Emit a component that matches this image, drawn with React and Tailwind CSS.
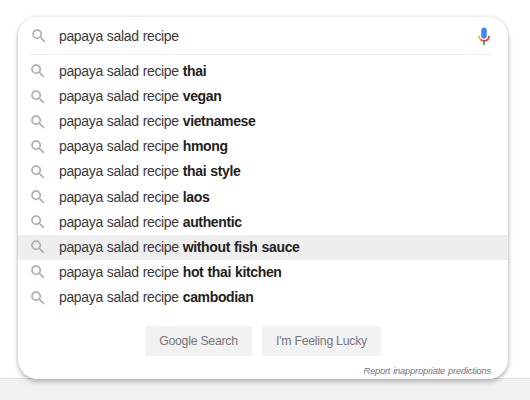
const suggestions = [
  'thai',
  'vegan',
  'vietnamese',
  'hmong',
  'thai style',
  'laos',
  'authentic',
  'without fish sauce',
  'hot thai kitchen',
  'cambodian',
];

function SearchIcon({ className }) {
  return (
    <svg viewBox="0 0 24 24" fill="#abaeb2" stroke="#abaeb2" strokeWidth="0.3" className={className}>
      <path d="M15.5 14h-.79l-.28-.27A6.471 6.471 0 0 0 16 9.5 6.5 6.5 0 1 0 9.5 16c1.61 0 3.09-.59 4.23-1.57l.27.28v.79l5 4.99L20.49 19l-4.99-5zm-6 0C7.01 14 5 11.99 5 9.5S7.01 5 9.5 5 14 7.01 14 9.5 11.99 14 9.5 14z" />
    </svg>
  );
}

function MicIcon() {
  return (
    <svg viewBox="0 0 24 24" className="w-5 h-5">
      <path fill="#4285f4" stroke="#4285f4" strokeWidth="0.7" d="M12 15c1.66 0 3-1.31 3-2.97V5c0-1.66-1.34-3-3-3S9 3.34 9 5v7.03C9 13.69 10.34 15 12 15z" />
      <path fill="#34a853" d="M10.9 18.08h2.2V22.4h-2.2z" />
      <path fill="#fbbc05" d="M7.05 16.87A6.98 6.98 0 0 1 4.8 12h2.2c0 1.39.56 2.44 1.47 3.35l-1.42 1.52z" />
      <path fill="#ea4335" d="M12 16.93a4.97 4.97 0 0 1-3.54-1.55l-1.41 1.49A6.98 6.98 0 0 0 12 19c3.87 0 7.2-2.92 7.2-7H17c0 2.92-2.24 4.93-5 4.93z" />
    </svg>
  );
}

export default function App() {
  return (
    <div className="h-[400px] grid bg-[linear-gradient(to_bottom,#fff_378px,#e4e4e4_378px,#e4e4e4_379px,#f2f2f2_379px)] font-['Liberation_Sans',Arial,sans-serif] text-[14px] tracking-[-0.35px] [word-spacing:0.5px] text-[#222]">
      <div className="mt-[17px] ml-[18px] w-[490px] h-[362px] flex flex-col rounded-[20px] bg-white shadow-[0_3px_5px_0_rgba(32,33,36,0.26),0_0_4px_rgba(32,33,36,0.14)]">
        <div className="h-[37px] flex items-center pl-3 pr-[14px]">
          <SearchIcon className="w-[18px] h-[18px]" />
          <span className="flex-1 ml-[11px] pt-px text-[#3a3a3a]">papaya salad recipe</span>
          <MicIcon />
        </div>
        <div className="ml-3 mr-4 h-px bg-[#eeeeee]" />

        <ul className="mt-[3.8px]">
          {suggestions.map(s => (
            <li
              key={s}
              className={`h-[25.15px] flex items-center pl-[11px] ${s === 'without fish sauce' ? 'bg-[#eeeeee]' : ''}`}
            >
              <SearchIcon className="w-[18px] h-[18px]" />
              <span className="ml-3 whitespace-pre text-[#3a3a3a]">papaya salad recipe <b className="text-[#222]">{s}</b></span>
            </li>
          ))}
        </ul>

        <div className="mt-[16px] flex justify-center gap-[10px] text-[12.25px] tracking-[-0.24px] text-[#757679]">
          <button className="w-[107px] h-[30px] rounded-[3px] bg-[#f2f2f2]">Google Search</button>
          <button className="w-[119px] h-[30px] rounded-[3px] bg-[#f2f2f2]">I'm Feeling Lucky</button>
        </div>

        <div className="mt-[9px] pr-[17px] text-right text-[9.3px] tracking-[-0.18px] leading-3 italic text-[#70757a]">
          Report inappropriate predictions
        </div>
      </div>
    </div>
  );
}
